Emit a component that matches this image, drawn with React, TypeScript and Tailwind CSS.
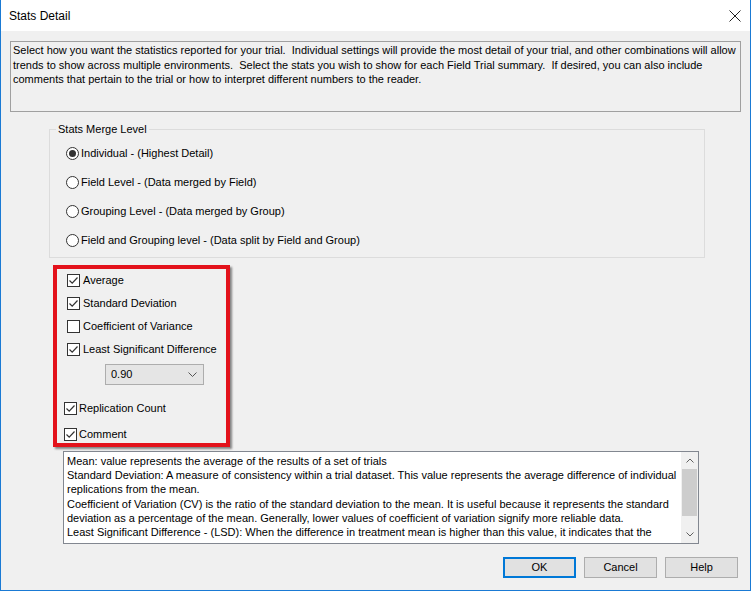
import React from 'react';

const font = { fontFamily: '"Liberation Sans", Arial, sans-serif' };

function CheckBox({ checked }: { checked: boolean }) {
  return (
    <span className="flex h-[13px] w-[13px] shrink-0 items-center justify-center border border-[#333] bg-white">
      {checked && (
        <svg width="11" height="11" viewBox="0 0 11 11">
          <path d="M1.5 5.5 L4.2 8.2 L9.5 2.5" fill="none" stroke="#333" strokeWidth="1.2" />
        </svg>
      )}
    </span>
  );
}

function Radio({ checked }: { checked: boolean }) {
  return (
    <span className="flex h-[13px] w-[13px] shrink-0 items-center justify-center rounded-full border border-[#333] bg-white">
      {checked && <span className="h-[7px] w-[7px] rounded-full bg-[#333]" />}
    </span>
  );
}

const radios = [
  { label: 'Individual - (Highest Detail)', checked: true },
  { label: 'Field Level - (Data merged by Field)', checked: false },
  { label: 'Grouping Level - (Data merged by Group)', checked: false },
  { label: 'Field and Grouping level - (Data split by Field and Group)', checked: false },
];

export default function App() {
  return (
    <div
      className="flex h-[591px] w-[751px] flex-col border-x border-b border-[#1a7ad4] bg-[#f0f0f0] text-[11px] text-black"
      style={font}
    >
      {/* title bar */}
      <div className="flex h-[31px] shrink-0 items-center justify-between bg-white pl-[8px] pr-[6px]">
        <span className="text-[12px]">Stats Detail</span>
        <svg width="12" height="12" viewBox="0 0 12 12" className="mr-[3px]">
          <path d="M0.5 0.5 L11.5 11.5 M11.5 0.5 L0.5 11.5" stroke="#222" strokeWidth="1" />
        </svg>
      </div>

      <div className="flex flex-1 flex-col px-[9px]">
        <div className="mt-[10px] h-[71px] border border-[#a0a0a0] px-[2px] pt-[1px] leading-[14.5px]">
          Select how you want the statistics reported for your trial.&nbsp; Individual settings will provide the most detail of your trial, and other combinations will allow trends to show across multiple environments.&nbsp; Select the stats you wish to show for each Field Trial summary.&nbsp; If desired, you can also include comments that pertain to the trial or how to interpret different numbers to the reader.
        </div>

        <fieldset className="ml-[39px] mt-[9px] h-[137px] w-[656px] border border-[#dcdcdc] pl-[16px]">
          <legend className="ml-[-10px] px-[2px]">Stats Merge Level</legend>
          <div className="mt-[9px] flex flex-col gap-[16px]">
            {radios.map((r) => (
              <div key={r.label} className="flex h-[13px] items-center gap-[2px]">
                <Radio checked={r.checked} />
                <span>{r.label}</span>
              </div>
            ))}
          </div>
        </fieldset>

        <div className="ml-[43px] mt-[7px] h-[182px] w-[177px] border-4 border-[#e3121b] shadow-[2px_2px_2px_rgba(0,0,0,0.45)]">
          <div className="ml-[10px] mt-[5px] flex flex-col gap-[10px]">
            {[
              { label: 'Average', checked: true },
              { label: 'Standard Deviation', checked: true },
              { label: 'Coefficient of Variance', checked: false },
              { label: 'Least Significant Difference', checked: true },
            ].map((c) => (
              <div key={c.label} className="flex h-[13px] items-center gap-[3px] whitespace-nowrap">
                <CheckBox checked={c.checked} />
                <span>{c.label}</span>
              </div>
            ))}
          </div>
          <div className="ml-[48px] mt-[8px] flex h-[21px] w-[99px] items-center justify-between border border-[#adadad] bg-[#e5e5e5] pl-[5px] pr-[6px]">
            <span>0.90</span>
            <svg width="9" height="6" viewBox="0 0 9 6">
              <path d="M0.5 0.5 L4.5 4.5 L8.5 0.5" fill="none" stroke="#555" strokeWidth="1" />
            </svg>
          </div>
          <div className="ml-[7px] mt-[17px] flex flex-col gap-[13px]">
            {['Replication Count', 'Comment'].map((l) => (
              <div key={l} className="flex h-[13px] items-center gap-[2px]">
                <CheckBox checked />
                <span>{l}</span>
              </div>
            ))}
          </div>
        </div>

        <div className="ml-[53px] mt-[4px] flex h-[93px] w-[636px] border border-[#828790] bg-white">
          <div className="h-[88px] flex-1 overflow-hidden pl-[3px] pt-[2px] leading-[14.2px]">
            <div>Mean: value represents the average of the results of a set of trials</div>
            <div>Standard Deviation: A measure of consistency within a trial dataset. This value represents the average difference of individual replications from the mean.</div>
            <div>Coefficient of Variation (CV) is the ratio of the standard deviation to the mean. It is useful because it represents the standard deviation as a percentage of the mean. Generally, lower values of coefficient of variation signify more reliable data.</div>
            <div>Least Significant Difference - (LSD): When the difference in treatment mean is higher than this value, it indicates that the treatment effect is significant.</div>
          </div>
          <div className="flex w-[17px] shrink-0 flex-col bg-[#f0f0f0]">
            <div className="flex h-[17px] items-center justify-center">
              <svg width="8" height="5" viewBox="0 0 8 5">
                <path d="M0.5 4.5 L4 1 L7.5 4.5" fill="none" stroke="#606060" strokeWidth="1" />
              </svg>
            </div>
            <div className="mx-[1px] h-[47px] bg-[#cdcdcd]" />
            <div className="flex-1" />
            <div className="flex h-[17px] items-center justify-center">
              <svg width="8" height="5" viewBox="0 0 8 5">
                <path d="M0.5 0.5 L4 4 L7.5 0.5" fill="none" stroke="#606060" strokeWidth="1" />
              </svg>
            </div>
          </div>
        </div>

        <div className="mt-[13px] flex justify-end gap-[8px] pr-[3px]">
          <button className="h-[21px] w-[73px] border-2 border-[#0078d7] bg-[#e1e1e1]">OK</button>
          <button className="h-[21px] w-[73px] border border-[#adadad] bg-[#e1e1e1]">Cancel</button>
          <button className="h-[21px] w-[73px] border border-[#adadad] bg-[#e1e1e1]">Help</button>
        </div>
      </div>
    </div>
  );
}
